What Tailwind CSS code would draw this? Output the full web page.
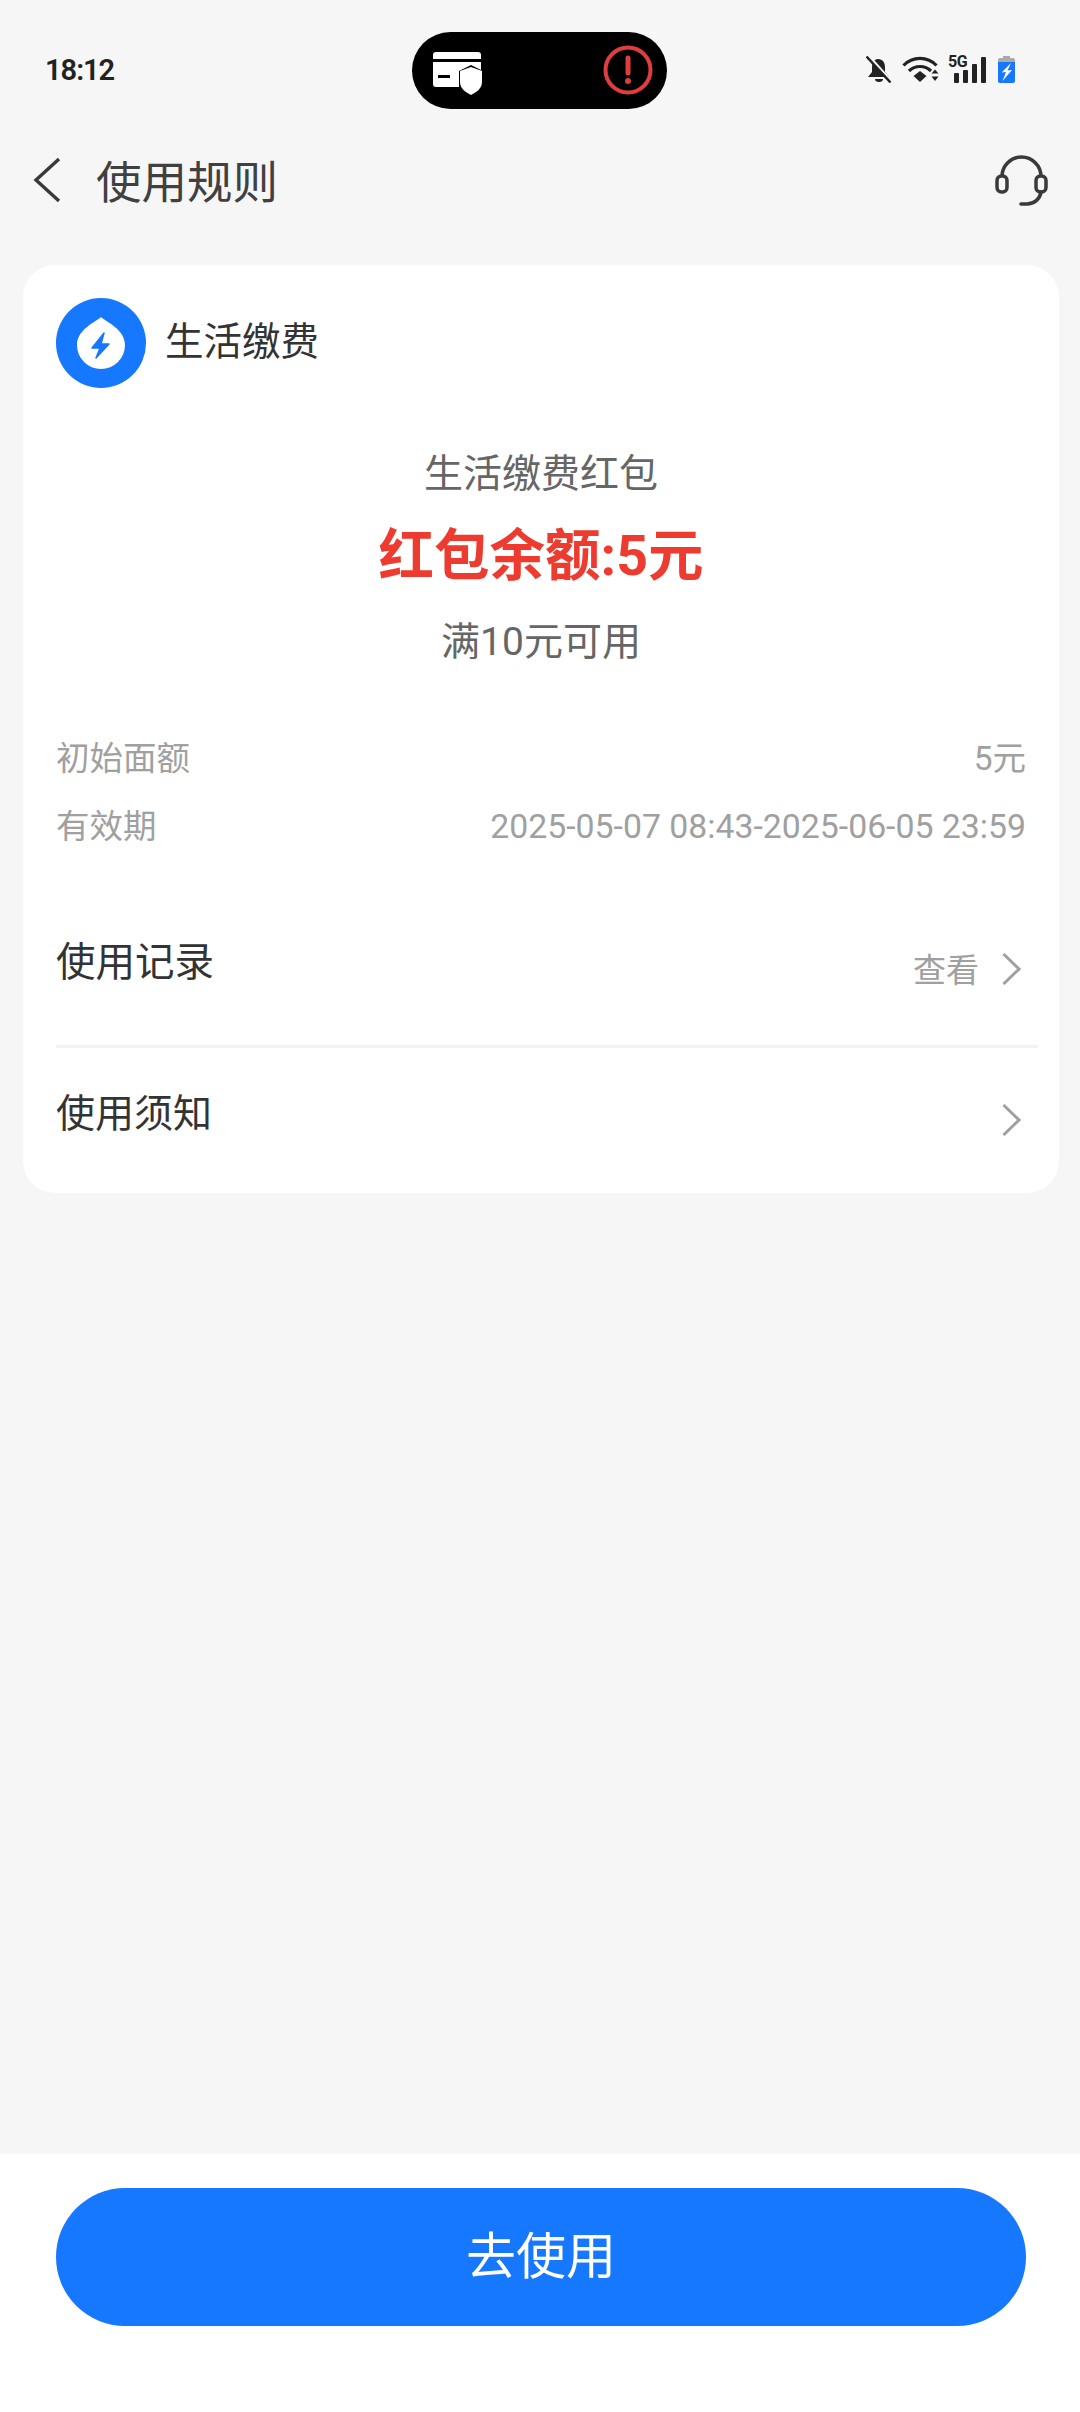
<!doctype html>
<html lang="zh-CN"><head><meta charset="utf-8">
<script src="https://cdn.jsdelivr.net/npm/@tailwindcss/browser@4"></script>
</head>
<body class="m-0">
<div class="w-[1080px] h-[2412px] bg-[#f6f6f6] flex flex-col overflow-hidden font-['Roboto','Noto_Sans_CJK_SC',sans-serif] relative">
  <!-- status bar -->
  <div class="h-[135px] shrink-0 relative flex items-center pl-[45px] pr-[65px] justify-between">
    <span class="text-[29px] font-semibold text-[#222] leading-none tracking-[-1px] mt-[6px]">18:12</span>
    <div class="absolute left-[412px] top-[32px] w-[255px] h-[77px] rounded-full bg-black">
      <svg class="absolute left-[21px] top-[20px]" width="49" height="43" viewBox="0 0 49 43" fill="none">
        <path d="M0 7V3a3 3 0 0 1 3-3h42a3 3 0 0 1 3 3v4z" fill="#fff"/>
        <path d="M0 10h48v8l-10-5-12 6v16H3a3 3 0 0 1-3-3z" fill="#fff"/>
        <rect x="5" y="23" width="12" height="3" fill="#000"/>
        <path d="M38 15l11 4v11c0 6-5 10-11 13-6-3-11-7-11-13V19z" fill="#fff"/>
      </svg>
      <svg class="absolute left-[191px] top-[13px]" width="50" height="50" viewBox="0 0 50 50" fill="none">
        <circle cx="25" cy="25" r="22.500" stroke="#e03e3e" stroke-width="4"/>
        <path d="M25 13v15" stroke="#e03e3e" stroke-width="5" stroke-linecap="round"/>
        <circle cx="25" cy="36" r="3" fill="#e03e3e"/>
      </svg>
    </div>
    <div class="flex items-center mt-[3px]">
      <svg width="25" height="27" viewBox="0 0 25 27" fill="none" class="mr-[11px]">
        <path d="M12 3c5 0 7 4 7 8v5l4 5H2l4-5v-5c0-4 2-8 6-8z" fill="#222"/>
        <path d="M9 23a4 3 0 0 0 8 0z" fill="#222"/>
        <path d="M2.500 0L26 26" stroke="#f6f6f6" stroke-width="3"/>
        <path d="M0.500 0.500L24.500 26.500" stroke="#222" stroke-width="2.400"/>
      </svg>
      <svg width="37" height="26" viewBox="0 0 37 26" fill="none" class="mr-[9px]">
        <path d="M1.500 9.500c9-9.500 24-9.500 33 0" stroke="#222" stroke-width="3.200"/>
        <path d="M7 15c6-6 16-6 22 0" stroke="#222" stroke-width="3.200"/>
        <path d="M11.500 20l6.500-5 6.500 5-6.500 6z" fill="#222"/>
        <path d="M29.500 17.500l3.500-4 3.500 4zM29.500 20.500h7l-3.500 4.500z" fill="#222"/>
      </svg>
      <div class="relative w-[38px] h-[27px] mr-[12px]">
        <span class="absolute left-0 top-[-1px] text-[16px] font-bold leading-[13px] text-[#222] tracking-[-0.5px]">5G</span>
        <div class="absolute right-0 bottom-0 flex items-end gap-[4px]">
          <div class="w-[5px] h-[10px] bg-[#222] rounded-[1px]"></div>
          <div class="w-[5px] h-[13px] bg-[#222] rounded-[1px]"></div>
          <div class="w-[5px] h-[19px] bg-[#222] rounded-[1px]"></div>
          <div class="w-[5px] h-[26px] bg-[#222] rounded-[1px]"></div>
        </div>
      </div>
      <svg width="17" height="27" viewBox="0 0 17 27" fill="none">
        <path d="M5 0h7v2H5z" fill="#aaa"/>
        <path d="M0 4a2 2 0 0 1 2-2h13a2 2 0 0 1 2 2v3H0z" fill="#aaa"/>
        <path d="M0 6h17v19a2 2 0 0 1-2 2H2a2 2 0 0 1-2-2z" fill="#1677ff"/>
        <path d="M13 7L3.500 16.500l4.500-.5L4.500 25l9.500-11-4.500.5L13 7z" fill="#fff"/>
      </svg>
    </div>
  </div>

  <!-- header -->
  <div class="h-[90px] shrink-0 flex items-center justify-between pl-[33px] pr-[32px]">
    <div class="flex items-center">
      <svg width="28" height="46" viewBox="0 0 28 46" fill="none"><path d="M26 2L3 23l23 21" stroke="#3a3a3a" stroke-width="3.400"/></svg>
      <span class="ml-[35px] text-[45.500px] leading-none text-[#404040] font-['Noto_Sans_CJK_SC',sans-serif]">使用规则</span>
    </div>
    <svg width="53" height="52" viewBox="0 0 53 52" fill="none" class="mt-[1px]">
      <path d="M7 21.500a19.500 19.500 0 0 1 39 0" stroke="#3a3a3a" stroke-width="3.600"/>
      <rect x="2" y="21" width="10" height="16" rx="4.500" stroke="#3a3a3a" stroke-width="3.500"/>
      <rect x="41" y="21" width="10" height="16" rx="4.500" stroke="#3a3a3a" stroke-width="3.500"/>
      <path d="M46 37c-1 7-7 12-14 12h-6" stroke="#3a3a3a" stroke-width="3.600" stroke-linecap="round"/>
    </svg>
  </div>

  <!-- card -->
  <div class="mt-[40px] ml-[23px] w-[1036px] h-[928px] bg-white rounded-[32px] flex flex-col shrink-0 font-['Noto_Sans_CJK_SC',sans-serif]">
    <div class="flex items-center pl-[33px] pt-[33px]">
      <div class="w-[90px] h-[90px] rounded-full bg-[#1677ff] flex items-center justify-center">
        <svg width="48" height="52" viewBox="0 0 48 52" fill="none">
          <path d="M24 0c5 5 24 12 24 28a24 24 0 0 1-48 0C0 12 19 5 24 0z" fill="#fff"/>
          <path d="M27 16L15 31h8l-4 10 13-14h-8z" fill="#1677ff" stroke="#1677ff" stroke-width="1.500" stroke-linejoin="round"/>
        </svg>
      </div>
      <span class="ml-[19px] mb-[9px] text-[38.500px] leading-none text-[#333]">生活缴费</span>
    </div>
    <div class="mt-[54px] flex flex-col items-center text-center">
      <div class="text-[39px] leading-[56px] text-[#666]">生活缴费红包</div>
      <div class="mt-[23px] text-[55.500px] leading-[72px] font-bold text-[#ee3b2f] font-['Roboto','Noto_Sans_CJK_SC',sans-serif]">红包余额:5元</div>
      <div class="mt-[21px] text-[39px] leading-[56px] text-[#666] font-['Roboto','Noto_Sans_CJK_SC',sans-serif]">满10元可用</div>
    </div>
    <div class="mt-[67px] pl-[33px] pr-[33px] flex flex-col gap-[24px] text-[33.500px] leading-[44px] text-[#a0a0a0] font-['Roboto','Noto_Sans_CJK_SC',sans-serif]">
      <div class="flex justify-between"><span>初始面额</span><span>5元</span></div>
      <div class="flex justify-between"><span>有效期</span><span class="text-[33.800px]">2025-05-07 08:43-2025-06-05 23:59</span></div>
    </div>
    <div class="mt-[76px] ml-[33px] mr-[21px] h-[123px] flex justify-between border-b-[3px] border-[#f2f2f2]">
      <span class="text-[39.500px] leading-[56px] text-[#333] mt-[6px]">使用记录</span>
      <div class="flex items-start mt-[18px] pr-[17px]">
        <span class="text-[33px] leading-[50px] text-[#a0a0a0]">查看</span>
        <svg class="ml-[23px] mt-[10px]" width="19" height="32" viewBox="0 0 19 32" fill="none"><path d="M1.500 1l15.500 15L1.500 31" stroke="#a0a0a0" stroke-width="3"/></svg>
      </div>
    </div>
    <div class="ml-[33px] mr-[21px] flex justify-between">
      <span class="text-[39px] leading-[56px] text-[#333] mt-[34px]">使用须知</span>
      <svg class="mt-[56px] mr-[17px]" width="19" height="32" viewBox="0 0 19 32" fill="none"><path d="M1.500 1l15.500 15L1.500 31" stroke="#a0a0a0" stroke-width="3"/></svg>
    </div>
  </div>

  <div class="flex-1"></div>
  <!-- bottom bar -->
  <div class="h-[258px] shrink-0 bg-white pl-[56px] pr-[54px] pt-[34px]">
    <div class="h-[138px] pb-[9px] rounded-full bg-[#1677ff] flex items-center justify-center text-white text-[50px] font-['Noto_Sans_CJK_SC',sans-serif]">去使用</div>
  </div>
</div>
</body></html>
